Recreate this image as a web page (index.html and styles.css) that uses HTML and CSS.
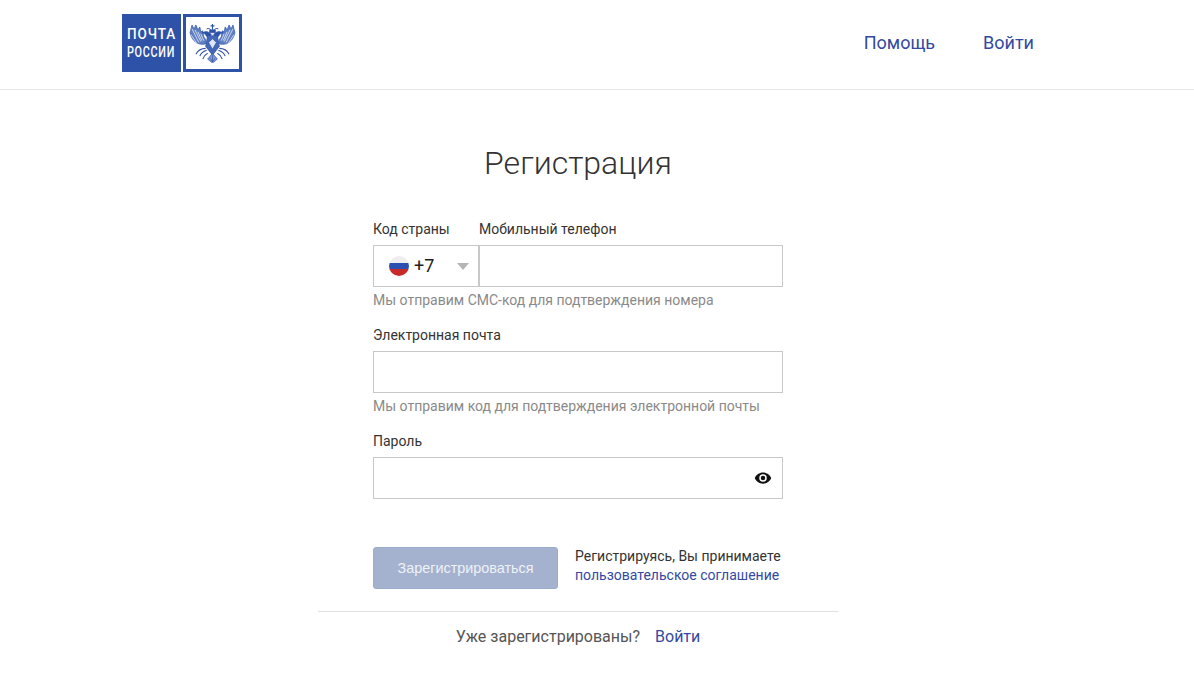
FILE: index.html
```html
<!DOCTYPE html>
<html lang="ru">
<head>
    <meta charset="UTF-8">
    <meta name="viewport" content="width=device-width, initial-scale=1.0">
    <title>Регистрация</title>
    <link rel="stylesheet" href="styles.css">
</head>
<body>
    <header class="top">
        <div class="top-inner">
            <a class="logo" href="#">
                <span class="logo-text">
                    <span class="logo-word logo-word-top">ПОЧТА</span>
                    <span class="logo-word logo-word-bottom">РОССИИ</span>
                </span>
                <span class="logo-eagle">
                    <svg width="49" height="39" viewBox="0 0 48 40" fill="none" stroke="#2d52a8">
                        <g id="half">
                            <!-- wing -->
                            <path d="M18 20C10 23 3 18 1 9L3 1l2 4 2-4 2 5 2-3 1 5 2-1 1 6 2 3 1 5z" fill="#5f7fc4" stroke-width=".7"/>
                            <path d="M3 5l7 14M6 6l6 12M9 8l4 9M12 10l3 7M2 11l6 9" stroke="#fff" stroke-width=".7"/>
                            <!-- head -->
                            <path d="M23 11c-2-2-4-4-7-3l-3 1 3 1c1 2 3 3 3 5z" fill="#2d52a8" stroke-width=".6"/>
                            <path d="M23 7c-1-2-3-3-5-2" stroke-width="1"/>
                            <!-- lower feathers -->
                            <path d="M17 25c-4 0-8 2-10 6M18 27c-3 1-6 3-7 6M19 30c-2 1-4 3-5 6" stroke-width="1.100"/>
                        </g>
                        <use href="#half" transform="matrix(-1 0 0 1 48 0)"/>
                        <!-- crown -->
                        <path d="M24 0v6M22 2h4" stroke-width="1.200"/>
                        <path d="M21 6h6v3h-6z" fill="#2d52a8" stroke-width=".6"/>
                        <!-- body -->
                        <path d="M19 12h10l2 11-7 9-7-9z" fill="#4567b8" stroke-width=".7"/>
                        <path d="M24 15l4 4-4 7-4-7z" fill="#dfe6f5" stroke-width=".7"/>
                        <!-- tail -->
                        <path d="M24 30l-5 6 5 4 5-4z" fill="#7f98d0" stroke-width=".7"/>
                        <path d="M24 31v8M21.500 35l2.500 4M26.500 35l-2.500 4" stroke-width=".6"/>
                    </svg>
                </span>
            </a>
            <nav class="top-nav">
                <a href="#">Помощь</a>
                <a href="#">Войти</a>
            </nav>
        </div>
    </header>

    <main class="page">
        <h1 class="title">Регистрация</h1>

        <form class="form" action="" method="post">
            <div class="phone-labels">
                <label class="label label-code">Код страны</label>
                <label class="label" for="phone">Мобильный телефон</label>
            </div>
            <div class="phone-row">
                <div class="code-box">
                    <svg class="flag" width="20" height="20" viewBox="0 0 20 20">
                        <clipPath id="flag-clip"><circle cx="10" cy="10" r="10"/></clipPath>
                        <g clip-path="url(#flag-clip)">
                            <rect width="20" height="7" fill="#eeeeee"/>
                            <rect y="7" width="20" height="6" fill="#2b4fb0"/>
                            <rect y="13" width="20" height="7" fill="#c62a2a"/>
                        </g>
                    </svg>
                    <span class="code">+7</span>
                    <span class="arrow"></span>
                </div>
                <input class="box box-phone" type="text" id="phone" name="phone">
            </div>
            <div class="hint">Мы отправим СМС-код для подтверждения номера</div>

            <label class="label label-field" for="email">Электронная почта</label>
            <input class="box" type="text" id="email" name="email">
            <div class="hint">Мы отправим код для подтверждения электронной почты</div>

            <label class="label label-field" for="password">Пароль</label>
            <div class="password-wrap">
                <input class="box" type="password" id="password" name="password">
                <svg class="eye" width="18" height="18" viewBox="0 0 24 24">
                    <path fill="#111" d="M12 4.5C7 4.5 2.7 7.6 1 12c1.7 4.4 6 7.5 11 7.5s9.3-3.1 11-7.5c-1.700-4.400-6-7.500-11-7.500zM12 17a5 5 0 1 1 0-10 5 5 0 0 1 0 10zm0-8a3 3 0 1 0 0 6 3 3 0 0 0 0-6z"/>
                </svg>
            </div>

            <div class="submit-row">
                <button class="submit" type="button" disabled>Зарегистрироваться</button>
                <div class="terms">
                    Регистрируясь, Вы принимаете<br>
                    <a href="#">пользовательское соглашение</a>
                </div>
            </div>
        </form>

        <div class="already">
            <span>Уже зарегистрированы?</span>
            <a href="#">Войти</a>
        </div>
    </main>
</body>
</html>
```

FILE: styles.css
```css
* {
  box-sizing: border-box;
}

body {
  margin: 0;
  font-family: Roboto, Arial, sans-serif;
  color: #3d3d3d;
  background: #fff;
}

a {
  text-decoration: none;
  color: #34499f;
}

.top {
  height: 90px;
  border-bottom: 1px solid #e8e8e8;
}

.top-inner {
  width: 1156px;
  height: 89px;
  padding: 14px 122px 0;
  display: flex;
  justify-content: space-between;
  align-items: flex-start;
}

.logo {
  display: flex;
  gap: 2px;
  width: 120px;
  height: 58px;
}

.logo-text {
  display: block;
  width: 59px;
  height: 58px;
  padding: 11px 0 0 5px;
  background: #2d52a8;
  overflow: hidden;
}

.logo-word {
  display: block;
  width: max-content;
  height: 18px;
  color: #fff;
  font-size: 15px;
  line-height: 18px;
  font-weight: 500;
  letter-spacing: 1px;
  transform-origin: left;
}

.logo-word-top {
  transform: scaleX(0.9);
}

.logo-word-bottom {
  transform: scaleX(0.72);
}

.logo-eagle {
  width: 59px;
  height: 58px;
  border: 3px solid #2d52a8;
  display: flex;
  align-items: center;
  justify-content: center;
  background: #fff;
}

.top-nav {
  display: flex;
  gap: 48px;
  padding-top: 18px;
  font-size: 18px;
  line-height: 22px;
}

.page {
  width: 1156px;
  display: flex;
  flex-direction: column;
  align-items: center;
}

.title {
  margin: 54px 0 0;
  font-size: 32px;
  line-height: 38px;
  font-weight: 300;
  color: #333;
}

.form {
  width: 410px;
  margin-top: 39px;
}

.phone-labels {
  display: flex;
}

.label {
  display: block;
  font-size: 14px;
  line-height: 16px;
  color: #333;
}

.label-code {
  width: 106px;
}

.label-field {
  margin-top: 19px;
}

.phone-row {
  display: flex;
  margin-top: 8px;
}

.code-box {
  width: 105px;
  height: 42px;
  flex: none;
  border: 1px solid #c8c8c8;
  border-right: none;
  display: flex;
  align-items: center;
  padding-left: 15px;
}

.flag {
  flex: none;
}

.code {
  margin-left: 5px;
  margin-top: -1px;
  font-size: 18px;
  color: #222;
}

.arrow {
  margin-left: 23px;
  width: 0;
  height: 0;
  border-left: 6px solid transparent;
  border-right: 6px solid transparent;
  border-top: 7px solid #b5b5b5;
}

.box {
  display: block;
  width: 100%;
  height: 42px;
  border: 1px solid #c8c8c8;
  border-radius: 0;
  outline: none;
  padding: 0 12px;
  background: #fff;
  font-family: inherit;
  font-size: 16px;
}

.box-phone {
  flex: 1;
  border-left: 2px solid #c8c8c8;
}

.label-field + .box,
.label-field + .password-wrap {
  margin-top: 8px;
}

.hint {
  margin-top: 5px;
  font-size: 14px;
  line-height: 16px;
  color: #8a8a8a;
}

.password-wrap {
  position: relative;
}

.eye {
  position: absolute;
  top: 12px;
  right: 11px;
}

.submit-row {
  display: flex;
  align-items: center;
  gap: 17px;
  margin-top: 48px;
}

.submit {
  width: 185px;
  height: 42px;
  flex: none;
  border: 1px solid #9dacc9;
  border-radius: 3px;
  background: #a5b2cf;
  color: #eef1f6;
  font-family: "Liberation Sans", Arial, sans-serif;
  font-size: 14.4px;
}

.terms {
  font-size: 14px;
  line-height: 19px;
  white-space: nowrap;
  color: #333;
  margin-top: -4px;
}

.already {
  width: 520px;
  margin-top: 22px;
  border-top: 1px solid #e0e0e0;
  padding-top: 16px;
  display: flex;
  justify-content: center;
  gap: 15px;
  font-size: 16px;
  line-height: 18px;
  color: #555;
}
```
